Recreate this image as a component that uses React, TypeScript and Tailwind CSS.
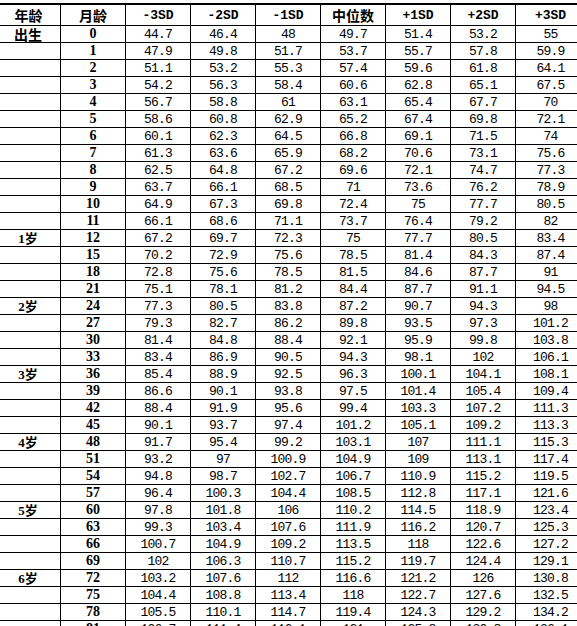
import React from 'react';

type Row = [string, string, string[]];

const rows: Row[] = [
  ['出生', '0', ['44.7', '46.4', '48', '49.7', '51.4', '53.2', '55']],
  ['', '1', ['47.9', '49.8', '51.7', '53.7', '55.7', '57.8', '59.9']],
  ['', '2', ['51.1', '53.2', '55.3', '57.4', '59.6', '61.8', '64.1']],
  ['', '3', ['54.2', '56.3', '58.4', '60.6', '62.8', '65.1', '67.5']],
  ['', '4', ['56.7', '58.8', '61', '63.1', '65.4', '67.7', '70']],
  ['', '5', ['58.6', '60.8', '62.9', '65.2', '67.4', '69.8', '72.1']],
  ['', '6', ['60.1', '62.3', '64.5', '66.8', '69.1', '71.5', '74']],
  ['', '7', ['61.3', '63.6', '65.9', '68.2', '70.6', '73.1', '75.6']],
  ['', '8', ['62.5', '64.8', '67.2', '69.6', '72.1', '74.7', '77.3']],
  ['', '9', ['63.7', '66.1', '68.5', '71', '73.6', '76.2', '78.9']],
  ['', '10', ['64.9', '67.3', '69.8', '72.4', '75', '77.7', '80.5']],
  ['', '11', ['66.1', '68.6', '71.1', '73.7', '76.4', '79.2', '82']],
  ['1岁', '12', ['67.2', '69.7', '72.3', '75', '77.7', '80.5', '83.4']],
  ['', '15', ['70.2', '72.9', '75.6', '78.5', '81.4', '84.3', '87.4']],
  ['', '18', ['72.8', '75.6', '78.5', '81.5', '84.6', '87.7', '91']],
  ['', '21', ['75.1', '78.1', '81.2', '84.4', '87.7', '91.1', '94.5']],
  ['2岁', '24', ['77.3', '80.5', '83.8', '87.2', '90.7', '94.3', '98']],
  ['', '27', ['79.3', '82.7', '86.2', '89.8', '93.5', '97.3', '101.2']],
  ['', '30', ['81.4', '84.8', '88.4', '92.1', '95.9', '99.8', '103.8']],
  ['', '33', ['83.4', '86.9', '90.5', '94.3', '98.1', '102', '106.1']],
  ['3岁', '36', ['85.4', '88.9', '92.5', '96.3', '100.1', '104.1', '108.1']],
  ['', '39', ['86.6', '90.1', '93.8', '97.5', '101.4', '105.4', '109.4']],
  ['', '42', ['88.4', '91.9', '95.6', '99.4', '103.3', '107.2', '111.3']],
  ['', '45', ['90.1', '93.7', '97.4', '101.2', '105.1', '109.2', '113.3']],
  ['4岁', '48', ['91.7', '95.4', '99.2', '103.1', '107', '111.1', '115.3']],
  ['', '51', ['93.2', '97', '100.9', '104.9', '109', '113.1', '117.4']],
  ['', '54', ['94.8', '98.7', '102.7', '106.7', '110.9', '115.2', '119.5']],
  ['', '57', ['96.4', '100.3', '104.4', '108.5', '112.8', '117.1', '121.6']],
  ['5岁', '60', ['97.8', '101.8', '106', '110.2', '114.5', '118.9', '123.4']],
  ['', '63', ['99.3', '103.4', '107.6', '111.9', '116.2', '120.7', '125.3']],
  ['', '66', ['100.7', '104.9', '109.2', '113.5', '118', '122.6', '127.2']],
  ['', '69', ['102', '106.3', '110.7', '115.2', '119.7', '124.4', '129.1']],
  ['6岁', '72', ['103.2', '107.6', '112', '116.6', '121.2', '126', '130.8']],
  ['', '75', ['104.4', '108.8', '113.4', '118', '122.7', '127.6', '132.5']],
  ['', '78', ['105.5', '110.1', '114.7', '119.4', '124.3', '129.2', '134.2']],
  ['', '81', ['106.7', '111.4', '116.1', '121', '125.8', '130.8', '136.1']],
];

const sdHeaders = ['-3SD', '-2SD', '-1SD', '中位数', '+1SD', '+2SD', '+3SD'];

const gridCols = 'grid grid-cols-[60px_65px_65px_65px_65px_65px_65px_65px_70px]';
const cjk = "font-['Noto_Sans_CJK_SC',sans-serif]";
const mono = "font-['Liberation_Mono',monospace]";

export default function App() {
  return (
    <div className="w-[577px] h-[626px] overflow-hidden bg-white pt-[3px] text-black">
      <div className="w-[585px] border-t-2 border-black">
        <div className={`${gridCols} h-[21px] border-b border-black`}>
          <div className={`flex items-center justify-center pr-[3px] text-[14px] font-bold leading-none ${cjk}`}>
            年龄
          </div>
          <div className={`flex items-center justify-center border-l border-black text-[14px] font-bold leading-none ${cjk}`}>
            月龄
          </div>
          {sdHeaders.map((h) =>
            h === '中位数' ? (
              <div
                key={h}
                className={`flex items-center justify-center border-l border-black text-[14px] font-bold leading-none ${cjk}`}
              >
                {h}
              </div>
            ) : (
              <div
                key={h}
                className={`flex items-center justify-center border-l border-black text-[13px] font-bold leading-none ${mono}`}
              >
                {h}
              </div>
            )
          )}
        </div>

        {rows.map(([age, month, values]) => (
          <div key={month} className={`${gridCols} h-[17px] border-b border-black`}>
            <div
              className={`flex items-center justify-center pr-[4px] font-bold leading-none ${
                age === '出生'
                  ? `text-[14px] ${cjk}`
                  : "text-[13px] font-['Liberation_Serif','Noto_Sans_CJK_SC',serif]"
              }`}
            >
              {age}
            </div>
            <div className="flex items-center justify-center border-l border-black font-['Liberation_Serif',serif] text-[14px] font-bold leading-none">
              {month}
            </div>
            {values.map((v, i) => (
              <div
                key={i}
                className={`flex items-center justify-center border-l border-black text-[13px] tracking-[-0.8px] leading-none ${mono}`}
              >
                {v}
              </div>
            ))}
          </div>
        ))}
      </div>
    </div>
  );
}
